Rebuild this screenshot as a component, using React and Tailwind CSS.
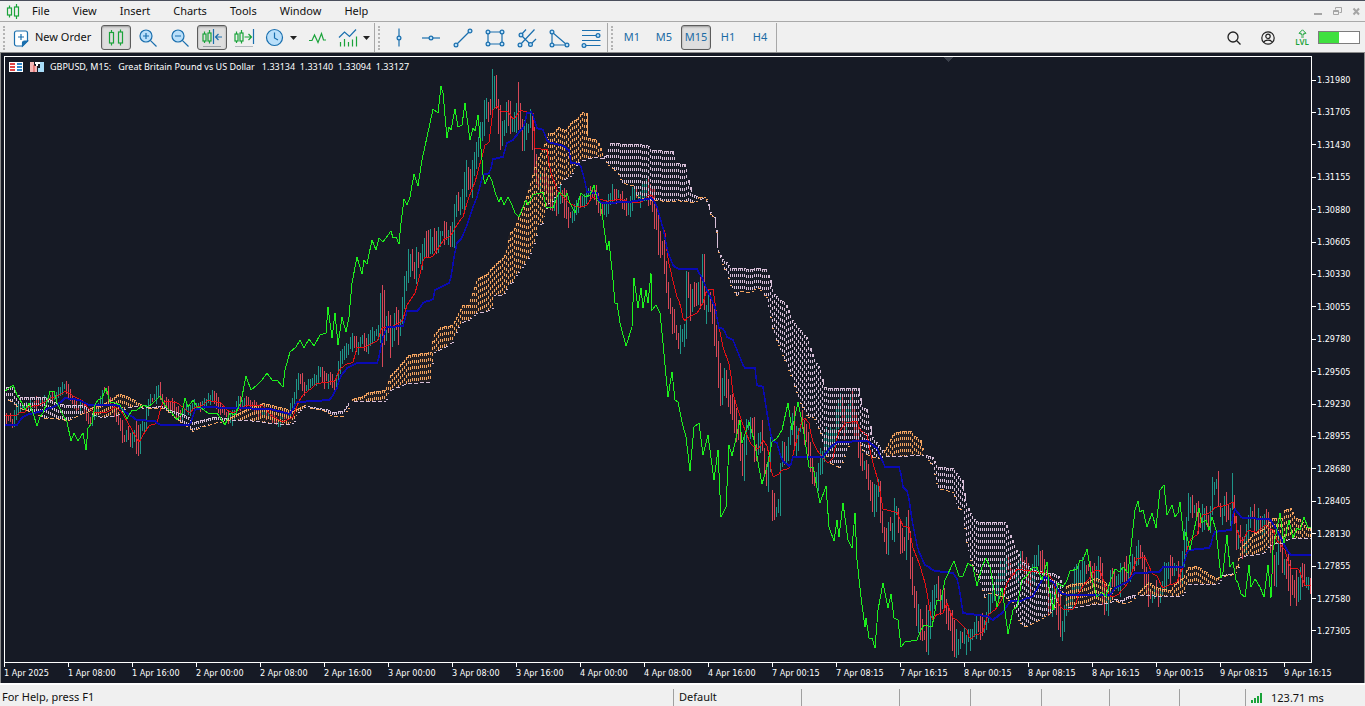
import React from 'react';

const LEFT = 5;
const TOP = 57;
const WIDTH = 1306;
const HEIGHT = 605;

const CHIKOU = [5,391,8,389,13,385,17,395,22,403,25,410,29,403,33,413,37,426,40,417,43,413,47,402,50,391,54,391,57,403,62,413,67,422,71,441,74,433,78,441,83,433,86,450,88,428,92,423,95,405,98,400,102,398,106,388,110,402,115,403,120,405,127,419,132,410,137,410,143,405,148,407,153,403,160,396,163,402,167,408,172,413,177,420,182,413,185,398,188,407,193,400,197,407,200,407,208,413,217,413,225,425,230,413,235,415,241,402,246,376,251,390,257,385,262,380,267,373,272,380,277,380,283,387,285,370,290,352,296,347,300,340,304,348,309,339,314,346,320,335,326,333,328,307,332,338,335,313,338,345,342,317,346,332,349,317,352,283,357,257,362,274,364,260,367,264,372,240,376,250,379,238,383,242,391,231,393,238,396,237,399,244,401,223,404,199,407,205,410,197,414,174,418,186,422,160,427,137,433,109,438,113,441,86,443,93,447,138,449,127,451,130,455,109,458,127,462,125,465,103,470,140,473,128,475,131,478,115,482,160,483,175,485,184,489,175,492,181,496,195,499,202,501,197,504,205,508,197,512,205,515,213,519,217,523,207,526,200,528,205,533,195,543,192,546,207,553,208,557,197,560,192,565,197,567,193,570,203,575,213,578,203,581,193,585,197,590,195,594,185,597,200,600,203,603,220,607,250,609,241,613,280,615,303,617,303,620,323,626,346,632,327,634,278,638,308,641,288,643,308,646,290,648,303,651,273,652,310,656,305,660,313,663,343,668,397,672,372,675,400,678,402,682,422,686,437,690,471,694,427,699,423,703,455,708,435,714,480,718,450,721,517,726,507,729,445,732,456,735,443,740,420,742,443,749,422,754,440,762,484,767,467,772,442,777,438,782,430,788,403,792,430,798,402,803,427,809,467,813,467,820,503,826,486,829,527,834,541,837,520,839,537,843,503,848,540,852,548,855,513,857,560,861,597,865,627,866,618,869,638,872,638,875,648,878,610,883,583,888,608,891,594,894,618,898,620,901,647,905,642,917,640,920,632,924,625,932,627,937,600,941,600,945,580,954,561,959,576,963,576,968,563,973,567,977,586,982,567,986,558,990,567,997,607,1002,588,1008,634,1013,610,1017,607,1022,580,1026,577,1032,568,1037,567,1042,580,1047,562,1049,587,1053,610,1058,583,1063,587,1067,580,1070,571,1077,569,1080,560,1083,560,1087,549,1090,567,1093,583,1097,597,1102,592,1106,597,1110,582,1115,569,1120,572,1123,567,1128,573,1131,547,1135,510,1138,501,1140,512,1143,510,1147,527,1152,513,1156,528,1160,490,1164,485,1167,515,1172,505,1175,517,1178,513,1180,502,1184,540,1186,532,1190,550,1194,530,1199,508,1202,523,1206,520,1209,530,1212,517,1216,530,1221,578,1223,572,1227,535,1230,567,1233,562,1236,580,1238,583,1241,594,1245,597,1249,565,1251,587,1255,579,1260,587,1264,597,1268,565,1271,598,1273,550,1280,513,1284,543,1289,520,1293,538,1297,528,1300,530,1304,517,1308,528,1311,527];

const TENKAN = [5,415,17,415,20,412,25,412,28,406,40,405,50,398,60,395,65,391,72,395,77,398,82,400,87,407,93,412,107,412,115,407,122,412,128,423,139,442,145,432,150,425,157,423,162,403,168,401,175,402,180,405,190,413,195,407,203,405,208,400,220,402,227,410,233,413,247,405,262,405,273,417,283,422,293,417,298,403,303,395,312,388,317,383,335,381,340,369,347,364,353,362,357,347,365,347,372,343,378,340,382,327,390,327,402,322,407,305,410,300,415,293,419,278,424,257,432,257,437,250,445,238,450,237,455,228,460,220,463,217,468,200,475,182,481,160,485,145,489,142,493,110,497,106,500,111,508,111,514,120,520,110,533,113,534,148,547,149,550,170,557,190,563,197,570,204,580,207,587,205,592,197,597,198,607,201,620,199,633,202,642,202,650,194,653,197,657,209,665,233,668,260,677,297,680,303,684,323,687,318,697,313,703,303,707,289,713,289,717,317,723,347,730,367,733,393,738,410,743,425,750,443,758,450,763,440,768,448,772,476,778,475,782,470,790,468,794,450,800,427,804,417,809,423,812,440,818,452,828,463,833,458,838,433,847,422,857,421,860,430,867,435,872,460,878,480,883,509,897,512,903,526,909,527,913,548,920,565,926,587,932,622,937,614,943,613,947,603,953,618,957,620,967,630,970,640,975,635,983,632,988,615,995,610,1002,600,1007,583,1017,569,1027,570,1047,573,1053,580,1058,603,1063,609,1074,609,1080,590,1088,580,1095,570,1100,570,1107,590,1111,597,1118,595,1128,583,1137,558,1145,557,1152,573,1158,577,1162,588,1177,582,1183,567,1187,550,1190,540,1197,535,1202,515,1212,512,1215,507,1227,505,1233,502,1237,530,1242,543,1248,530,1257,532,1265,525,1273,530,1277,540,1285,550,1290,568,1298,568,1305,585,1311,585];

const KIJUN = [5,425,17,425,22,417,30,414,45,410,57,405,65,398,80,400,88,405,118,405,125,412,137,420,155,421,160,425,190,425,195,410,203,407,235,408,270,409,290,414,297,402,330,400,337,388,340,377,347,368,357,363,378,363,382,340,387,327,403,326,407,311,418,311,423,303,433,299,435,290,450,283,454,257,457,243,462,238,467,225,472,210,477,197,483,175,490,173,493,159,503,157,507,143,513,140,520,131,524,127,527,113,532,112,537,128,543,130,548,142,563,146,569,150,571,163,580,164,584,177,587,192,597,193,600,203,630,202,652,198,657,207,663,228,668,253,673,265,678,269,697,269,703,280,708,292,715,307,719,328,724,329,727,337,733,340,737,350,744,368,755,368,756,385,763,387,767,413,772,440,777,443,782,460,790,467,793,457,823,457,830,448,837,442,867,441,877,448,885,467,900,467,903,487,908,492,912,520,918,550,925,565,935,571,953,573,958,580,963,613,987,616,993,620,1002,613,1010,601,1020,601,1033,596,1040,583,1045,577,1053,582,1060,593,1067,595,1110,595,1115,588,1127,582,1135,573,1160,572,1163,567,1183,567,1188,550,1210,548,1214,532,1231,530,1234,508,1242,518,1270,519,1277,530,1287,550,1291,555,1311,555];

// Each entry: trend direction, then x / upper / lower triples
const CLOUD = [
  ['down', [5,387,397,12,387,403,20,397,408,35,397,413,45,397,418,55,403,418,67,405,420,82,405,413,88,408,411]],
  ['up', [89,408,413,100,405,417,110,400,416,117,394,415,125,395,408,135,401,406,143,406,408]],
  ['down', [145,407,408,163,406,408,173,411,416,187,416,427,192,422,431,200,420,427,213,417,423,228,418,420]],
  ['up', [229,418,420,247,408,420,263,403,422,283,408,424,293,411,423,298,408,412,305,405,406]],
  ['down', [307,406,407,325,409,411,332,412,416,343,411,416,348,403,408]],
  ['up', [351,399,401,360,397,401,368,392,401,385,390,401,390,375,390,397,368,387,408,355,383,430,352,382,433,335,353,440,327,349,452,325,342,458,313,327,462,305,322,468,305,320,477,278,312,487,273,311,492,267,308,494,265,295,503,257,295,507,247,287,509,233,283,513,230,282,517,220,273,522,207,267,527,193,260,530,183,253,535,163,240,538,157,225,543,147,222,547,133,203,553,133,200,558,127,187,565,130,178,571,122,175,577,118,163,582,112,160,586,113,159,588,138,158,597,140,157,602,153,158]],
  ['down', [604,156,160,607,155,163,609,143,166,617,143,172,622,144,183,632,144,185,637,144,197,647,145,199,651,150,200,673,151,201,675,163,200,685,164,201,688,180,201,692,194,202,697,197,201]],
  ['up', [698,197,199,705,197,198,707,200,204]],
  ['down', [708,204,206,710,212,214,714,217,218,716,230,232,718,250,252,721,258,262,727,263,275,730,268,285,737,268,297,740,268,291,750,269,292,757,268,287,766,269,297,770,280,317,773,293,333,780,300,350,785,303,363,792,320,380,800,330,403,807,338,417,813,357,417,820,370,433,824,387,453,830,388,463,840,388,468,845,388,453,850,388,442,858,388,440,862,407,450,867,410,455,872,437,457,882,450,458]],
  ['up', [883,452,455,888,443,456,893,433,456,902,431,456,911,431,455,913,435,455,920,440,455,923,452,455]],
  ['down', [925,455,457,932,457,465,937,467,488,953,468,492,957,475,508,962,480,510,965,500,537,970,513,560,975,521,572,980,522,583,984,522,597,988,522,593,1005,522,597,1007,527,599,1013,543,603,1017,552,618,1022,562,627,1033,570,623,1043,572,617,1053,573,610,1058,576,597,1063,587,591]],
  ['up', [1065,587,605,1067,585,607,1077,583,607,1087,582,605,1095,577,604,1107,583,603,1113,593,600]],
  ['down', [1114,599,600,1122,600,603,1127,596,603,1135,595,597]],
  ['up', [1137,593,595,1148,582,595,1157,588,596,1170,590,596,1175,583,596,1183,577,595,1187,567,584,1197,566,584,1207,573,584,1217,578,584,1220,575,580]],
  ['down', [1221,575,576,1233,573,574]],
  ['up', [1235,568,573,1237,563,572,1240,547,557,1247,540,555,1253,533,555,1263,528,553,1272,518,543,1282,518,543,1284,510,541,1290,508,538,1295,518,538,1300,519,538,1305,527,538,1311,528,538]],
];

const pairs = (flat, size) => {
  const rows = [];
  for (let i = 0; i < flat.length; i += size) rows.push(flat.slice(i, i + size));
  return rows;
};

const sample = (rows, x, column = 1) => {
  if (x <= rows[0][0]) return rows[0][column];
  for (let i = 1; i < rows.length; i++) {
    if (x <= rows[i][0]) {
      const a = rows[i - 1];
      const b = rows[i];
      return a[column] + ((b[column] - a[column]) * (x - a[0])) / (b[0] - a[0]);
    }
  }
  return rows[rows.length - 1][column];
};

const noise = (n) => {
  const v = Math.sin(n * 12.9898) * 43758.5453;
  return v - Math.floor(v);
};

const line = (flat) => pairs(flat, 2).map(([x, y], i) => `${i ? 'L' : 'M'}${x} ${y}`).join('');

const box = (x, y, w, h) => `M${x} ${y}h${w}v${h}h${-w}z`;

// Indicator lines move once per bar
const stepped = (flat) => {
  const rows = pairs(flat, 2);
  let d = '';
  for (let x = LEFT; x <= LEFT + WIDTH; x += 2) d += `${d ? 'L' : 'M'}${x} ${Math.round(sample(rows, x))}`;
  return d;
};

// Bars with unusually long wicks: x -> [high, low]
const SPIKES = { 382: [285, 367], 384: [290, 345], 398: [310, 345], 492: [69, 112], 494: [76, 108], 518: [82, 130], 500: [105, 150], 702: [254, 305], 704: [254, 310], 772: [490, 521], 1232: [473, 510], 1290: [560, 606], 1296: [570, 606], 138: [425, 456], 136: [420, 454], 954: [620, 657], 928: [610, 655], 926: [605, 652], 1060: [590, 637] };

const buildBars = () => {
  const opening = [[5, 418], [12, 422], [16, 410], [30, 405], [45, 400], [57, 395]];
  const closes = pairs(CHIKOU, 2);
  const close = (x) => (x < 57 ? sample(opening, x) : sample(closes, x - 52));
  const up = [];
  const down = [];
  for (let x = LEFT + 1; x < LEFT + WIDTH; x += 2) {
    const c = close(x);
    const o = close(x - 2);
    const reach = x < 300 ? 6 : x < 380 ? 8 : x > 570 && x < 640 ? 8 : 14;
    let high = Math.min(c, o) - 1 - noise(x) * reach;
    let low = Math.max(c, o) + 1 + noise(x + 0.7) * reach;
    if (SPIKES[x]) [high, low] = SPIKES[x];
    const y = Math.round(high);
    const rising = c - o + (noise(x + 3) - 0.5) * 3 < 0;
    (rising ? up : down).push(box(x, y, 1, Math.round(low) - y));
  }
  return { up: up.join(''), down: down.join('') };
};

const bars = buildBars();

// The cloud is hatched with one dotted column per bar: 3px on, 3px off
const cloudShapes = CLOUD.map(([trend, flat]) => {
  const rows = pairs(flat, 3);
  const end = rows[rows.length - 1][0];
  const outline = [...rows.map((r) => `${r[0]} ${r[1]}`), ...rows.map((r) => `${r[0]} ${r[2]}`).reverse()];
  let columns = '';
  let caps = '';
  let lower = '';
  for (let x = rows[0][0] + (rows[0][0] % 2), n = 0; x <= end; x += 2, n++) {
    const a = Math.round(sample(rows, x, 1));
    const b = Math.round(sample(rows, x, 2));
    const next = Math.round(sample(rows, x + 2, 1));
    for (let y = a; y < b; y += 6) columns += box(x, y, 1, Math.min(3, b - y));
    if (n % 3 !== 2) caps += box(x, a, 2, 1) + (next - a > 3 ? box(x + 1, a, 1, next - a - 2) : '');
    if (n % 3 !== 0) lower += box(x, b, 2, 1);
  }
  return { trend, columns, caps, lower, area: `M${outline.join('L')}z` };
});

const ORANGE = '#f4a460';
const THISTLE = '#d8bfd8';

function PriceChart() {
  return (
    <svg
      className="block h-full w-full"
      viewBox={`${LEFT} ${TOP} ${WIDTH} ${HEIGHT}`}
      preserveAspectRatio="none"
      fill="none"
      shapeRendering="crispEdges"
      role="img"
      aria-label="GBPUSD M15 with Ichimoku Kinko Hyo"
    >
      <path d={bars.up} fill="#1f9688" />
      <path d={bars.down} fill="#d64857" />
      {cloudShapes.map((s, i) => (
        <g key={i}>
          {s.trend === 'up' && <path d={s.area} fill="#c06010" fillOpacity="0.08" />}
          <path d={s.columns} fill={s.trend === 'up' ? ORANGE : THISTLE} />
          <path d={s.caps} fill={s.trend === 'up' ? ORANGE : THISTLE} />
          <path d={s.lower} fill={s.trend === 'up' ? THISTLE : ORANGE} />
        </g>
      ))}
      <path d={stepped(TENKAN)} stroke="#e60f14" />
      <path d={stepped(KIJUN)} stroke="#0a0ab4" strokeWidth="1.5" />
      <path d={line(CHIKOU)} stroke="#1df01d" />
      <path d="M943 57h11l-5.500 5z" fill="#3a3f4a" />
    </svg>
  );
}

const BLUE = '#1a6fae';
const GREEN = '#1aa33a';
const SKY = '#b9dffa';

function Icon({ children, size = 24 }) {
  return (
    <svg width={size} height={size} viewBox={`0 0 ${size} ${size}`} fill="none" stroke={BLUE} strokeWidth="1.2" className="shrink-0" aria-hidden="true">
      {children}
    </svg>
  );
}

const Node = ({ x, y }) => <circle cx={x} cy={y} r="1.9" fill={SKY} />;

const icons = {
  candles: (
    <Icon>
      <g stroke={GREEN}>
        <path d="M7.500 4v2.500M7.500 17v2.500M16.500 3.500V6M16.500 17v2.500" />
        <rect x="5.500" y="6.500" width="4" height="10.500" />
        <rect x="14.500" y="6" width="4" height="11" />
      </g>
    </Icon>
  ),
  zoomIn: (
    <Icon>
      <circle cx="10" cy="10" r="6" fill={SKY} />
      <path d="M14.300 14.300l6.200 6.200M7 10h6M10 7v6" />
    </Icon>
  ),
  zoomOut: (
    <Icon>
      <circle cx="10" cy="10" r="6" fill={SKY} />
      <path d="M14.300 14.300l6.200 6.200M7 10h6" />
    </Icon>
  ),
  scroll: (
    <Icon>
      <g stroke={GREEN}>
        <path d="M4.500 5.500V8M4.500 15v2M9.500 4v3M9.500 15v2.500" />
        <rect x="3" y="8" width="3" height="7" />
        <rect x="8" y="7" width="3" height="8" />
      </g>
      <path d="M13.500 3v15M22 11h-6.500M18.500 8l-3 3 3 3" />
      <path d="M3 20.500h18" stroke="#9aa0a6" strokeWidth="1" />
    </Icon>
  ),
  shift: (
    <Icon>
      <g stroke={GREEN}>
        <path d="M4.500 5.500V8M4.500 15v2M9.500 4v3M9.500 15v2.500M12.500 11h7M16.500 8l3 3-3 3" />
        <rect x="3" y="8" width="3" height="7" />
        <rect x="8" y="7" width="3" height="8" />
      </g>
      <path d="M21.500 3v15" />
      <path d="M3 20.500h18" stroke="#b5babf" strokeWidth="1" />
    </Icon>
  ),
  clock: (
    <Icon>
      <circle cx="10.500" cy="11.500" r="8" fill={SKY} />
      <path d="M10.500 6.500V12l3.500 2" />
    </Icon>
  ),
  wave: (
    <Icon>
      <path d="M4 14.500h3L9.500 9l3.500 7.500 3.500-9 2 6.500h2.500" stroke={GREEN} />
    </Icon>
  ),
  indicators: (
    <Icon>
      <path d="M2 11.500l5.500-5.500 5 4.500 6.500-7" />
      <path d="M3.500 16v4.500M7.500 13v7.500M11.500 16v4.500M15.500 13.500v7M19.500 10.500v10" stroke={GREEN} />
    </Icon>
  ),
  vertical: (
    <Icon>
      <path d="M12 2.500v18" />
      <Node x="12" y="12" />
    </Icon>
  ),
  horizontal: (
    <Icon>
      <path d="M3 12h18" />
      <Node x="12" y="12" />
    </Icon>
  ),
  trend: (
    <Icon>
      <path d="M5 19L19 5" />
      <Node x="5" y="19" />
      <Node x="19" y="5" />
    </Icon>
  ),
  rectangle: (
    <Icon>
      <path d="M5 6h14v12H5z" />
      <Node x="5" y="6" />
      <Node x="19" y="6" />
      <Node x="5" y="18" />
      <Node x="19" y="18" />
    </Icon>
  ),
  pitchfork: (
    <Icon>
      <path d="M5 19L19.500 3.500M6 9l5-5.500M6 9l9.500 9.500M15.500 18.500l5.500-5.500" />
      <Node x="6" y="9" />
      <Node x="5" y="19" />
      <Node x="15.500" y="18.500" />
    </Icon>
  ),
  triangle: (
    <Icon>
      <path d="M5 6v13h15z" />
      <Node x="5" y="6" />
      <Node x="5" y="19" />
      <Node x="20" y="19" />
    </Icon>
  ),
  fibo: (
    <Icon>
      <path d="M3 4.500h18.500M3 9.500h16M3 14.500h18.500M6 19.500h15.500" />
      <Node x="19" y="9.500" />
      <Node x="5" y="19.500" />
    </Icon>
  ),
};

function ToolButton({ icon, label, pressed, menu }) {
  return (
    <button
      type="button"
      aria-label={label}
      aria-pressed={pressed}
      className={
        menu
          ? 'flex h-6 w-[41px] shrink-0 items-center pl-1'
          : pressed
            ? 'mx-px flex h-[25px] w-[30px] shrink-0 items-center justify-center rounded-[3px] border border-[#5c5c5c] bg-[#dedede] shadow-[inset_0_1px_2px_#9a9a9a]'
            : 'flex h-6 w-8 shrink-0 items-center justify-center'
      }
    >
      {icon}
      {menu && (
        <svg width="7" height="4" viewBox="0 0 7 4" className="ml-0.5 shrink-0" aria-hidden="true">
          <path d="M0 0h7L3.500 4z" fill="#222" />
        </svg>
      )}
    </button>
  );
}

const Grip = () => <div className="mx-[3px] h-6 w-0 shrink-0 border-l-2 border-dotted border-[#b4b4b4]" />;
const Divider = () => <div className="h-full w-px shrink-0 bg-[#a8a8a8]" />;

function MenuBar() {
  return (
    <header className="flex h-[21px] items-center border-t border-[#4a4f5c] pr-1">
      <svg width="16" height="16" viewBox="0 0 16 16" fill="none" stroke={GREEN} strokeWidth="1.2" className="ml-[5px] shrink-0" aria-hidden="true">
        <path d="M4.500 2.500V5M4.500 12v2.500M11.500 1v3M11.500 13v3" />
        <rect x="2.500" y="5" width="4" height="7" />
        <rect x="9.500" y="4" width="4" height="9" />
      </svg>
      <nav className="ml-[11px] flex gap-[23px] text-[11px]">
        {['File', 'View', 'Insert', 'Charts', 'Tools', 'Window', 'Help'].map((m) => (
          <button key={m} type="button" className="leading-4">{m}</button>
        ))}
      </nav>
      <div className="ml-auto flex items-center gap-2.5 text-[#a5a5a5]">
        <button type="button" aria-label="Minimize">
          <svg width="9" height="9" viewBox="0 0 9 9"><path d="M0 6h8v2H0z" fill="currentColor" /></svg>
        </button>
        <button type="button" aria-label="Restore">
          <svg width="9" height="9" viewBox="0 0 9 9" fill="none" stroke="currentColor"><path d="M.5 3.500h5v4h-5zM.5 4.500h5M2.500 2.500v-2h6v5h-2" /></svg>
        </button>
        <button type="button" aria-label="Close">
          <svg width="9" height="9" viewBox="0 0 9 9" fill="none" stroke="currentColor" strokeWidth="2"><path d="M1.500 1.500l5.500 6M7 1.500l-5.500 6" /></svg>
        </button>
      </div>
    </header>
  );
}

function Toolbar() {
  return (
    <div className="flex h-8 items-center border-y border-[#a9a9a9] border-b-[#8c8c8c] pt-px">
      <Grip />
      <button type="button" className="ml-0.5 flex h-6 w-[90px] shrink-0 items-center gap-[3px] text-[11px] whitespace-nowrap">
        <Icon size={22}>
          <path d="M6.500 4h9a2 2 0 0 1 2 2v8l-5 5h-6a2 2 0 0 1-2-2V6a2 2 0 0 1 2-2z" fill="#fff" />
          <path d="M17.500 14h-3a2 2 0 0 0-2 2v3z" fill={BLUE} />
          <path d="M8 10h6M11 7v6" />
        </Icon>
        New Order
      </button>
      <ToolButton icon={icons.candles} label="Candlesticks" pressed />
      <ToolButton icon={icons.zoomIn} label="Zoom in" />
      <ToolButton icon={icons.zoomOut} label="Zoom out" />
      <ToolButton icon={icons.scroll} label="Auto scroll" pressed />
      <ToolButton icon={icons.shift} label="Chart shift" />
      <ToolButton icon={icons.clock} label="Timeframes" menu />
      <ToolButton icon={icons.wave} label="Tick chart" />
      <ToolButton icon={icons.indicators} label="Indicators" menu />
      <Divider />
      <Grip />
      <ToolButton icon={icons.vertical} label="Vertical line" />
      <ToolButton icon={icons.horizontal} label="Horizontal line" />
      <ToolButton icon={icons.trend} label="Trendline" />
      <ToolButton icon={icons.rectangle} label="Rectangle" />
      <ToolButton icon={icons.pitchfork} label="Pitchfork" />
      <ToolButton icon={icons.triangle} label="Triangle" />
      <ToolButton icon={icons.fibo} label="Fibonacci retracement" />
      <Divider />
      <Grip />
      {['M1', 'M5', 'M15', 'H1', 'H4'].map((t) => (
        <button
          key={t}
          type="button"
          aria-pressed={t === 'M15'}
          className={
            t === 'M15'
              ? 'mx-px h-[25px] w-[30px] shrink-0 rounded-[3px] border border-[#5c5c5c] bg-[#dedede] text-[11px] text-[#1a6ba5] shadow-[inset_0_1px_2px_#9a9a9a]'
              : 'h-6 w-8 shrink-0 text-[11px] text-[#1a6ba5]'
          }
        >
          {t}
        </button>
      ))}
      <Divider />
      <div className="ml-auto flex items-center gap-[18px] pr-[5px]">
        <button type="button" aria-label="Search">
          <svg width="16" height="16" viewBox="0 0 16 16" fill="none" stroke="#222" strokeWidth="1.300"><circle cx="7" cy="7" r="5" /><path d="M10.800 10.800l3.700 3.700" /></svg>
        </button>
        <button type="button" aria-label="Account">
          <svg width="16" height="16" viewBox="0 0 16 16" fill="none" stroke="#222" strokeWidth="1.200"><circle cx="8" cy="8" r="6.200" /><circle cx="8" cy="6.300" r="2.200" /><path d="M3.800 12.300c1-3 7.400-3 8.400 0" /></svg>
        </button>
        <div className="flex items-center gap-2">
          <button type="button" className="flex w-4 flex-col items-center text-[8px] leading-[8px] font-semibold text-[#1aa33a]">
            <svg width="9" height="9" viewBox="0 0 9 9" fill="none" stroke={GREEN} aria-hidden="true"><path d="M4.500.8L8 4.300H5.800V6H3.200V4.300H1zM3.200 8h2.600" /></svg>
            LVL
          </button>
          <div className="flex h-[13px] w-[42px] border border-[#7d7d7d] bg-white" role="img" aria-label="Battery half full">
            <div className="w-1/2 bg-[#3fe03f]" />
          </div>
        </div>
      </div>
    </div>
  );
}

const prices = Array.from({ length: 18 }, (_, i) => (1.3198 - i * 0.00275).toFixed(5));
const times = ['1 Apr 2025', '1 Apr 08:00', '1 Apr 16:00', '2 Apr 00:00', '2 Apr 08:00', '2 Apr 16:00', '3 Apr 00:00', '3 Apr 08:00', '3 Apr 16:00', '4 Apr 00:00', '4 Apr 08:00', '4 Apr 16:00', '7 Apr 00:15', '7 Apr 08:15', '7 Apr 16:15', '8 Apr 00:15', '8 Apr 08:15', '8 Apr 16:15', '9 Apr 00:15', '9 Apr 08:15', '9 Apr 16:15'];

function ChartWindow() {
  return (
    <main className="flex min-h-0 flex-1 flex-col border-x border-[#8c8c8c] bg-[#161a25] pt-[3px] pl-[3px] font-['DejaVu_Sans_Condensed','Noto_Sans',sans-serif] text-[9px] text-white">
      <div className="flex min-h-0 flex-1">
        <section className="relative min-w-0 flex-1 border border-white">
          <PriceChart />
          <div className="absolute top-1 left-1 flex items-center leading-3 whitespace-pre">
            <svg width="14" height="12" viewBox="0 0 14 12" aria-hidden="true">
              <path d="M0 1h14v10H0z" fill="#fff" />
              <path d="M1 2h5v2H1zM1 5h5v2H1zM1 8h5v2H1z" fill="#e04545" />
              <path d="M8 2h5v2H8zM8 5h5v2H8zM8 8h5v2H8z" fill="#2f86c8" />
            </svg>
            <svg width="14" height="12" viewBox="0 0 14 12" className="mr-1.5 ml-[7px]" aria-hidden="true">
              <path d="M0 1h4v4h3v6H0z" fill="#f4b6b6" />
              <path d="M10 1h4v10H8V7h2z" fill="#a9dcf8" />
              <path d="M5 1h5v2H8v2H6V3H5z" fill="#fff" />
              <path d="M4 4v7" stroke="#d94848" />
            </svg>
            <h1 className="font-['Noto_Sans',sans-serif] text-[9px]">GBPUSD, M15:   Great Britain Pound vs US Dollar   1.33134  1.33140  1.33094  1.33127</h1>
          </div>
        </section>
        <div className="flex w-[52px] shrink-0 flex-col justify-between pt-[18px] pb-[26px]">
          {prices.map((p) => (
            <div key={p} className="flex items-center gap-px leading-3">
              <span className="h-px w-1 bg-white" />
              {p}
            </div>
          ))}
        </div>
      </div>
      <div className="flex h-5 pr-4">
        {times.map((t) => (
          <div key={t} className="min-w-0 flex-1 whitespace-nowrap">
            <div className="h-1 w-px bg-white" />
            <div className="leading-3">{t}</div>
          </div>
        ))}
      </div>
    </main>
  );
}

function StatusBar() {
  const cell = 'mt-1 shrink-0 border-l border-[#a0a0a0] pl-[5px]';
  return (
    <footer className="flex h-[23px] border-t-2 border-white text-[11px] leading-4">
      <div className="mt-1 flex-1 pl-0.5">For Help, press F1</div>
      <div className={`${cell} w-32`}>Default</div>
      <div className={`${cell} w-[98px]`} />
      <div className={`${cell} w-[71px]`} />
      <div className={`${cell} w-[71px]`} />
      <div className={`${cell} w-[68px]`} />
      <div className={`${cell} w-[70px]`} />
      <div className={`${cell} w-[66px]`} />
      <div className={`${cell} flex w-[120px] items-center gap-2`}>
        <svg width="12" height="10" viewBox="0 0 12 10" fill={GREEN} aria-hidden="true">
          <path d="M0 7h2v3H0zM3 5h2v5H3zM6 3h2v7H6zM9 0h2v10H9z" />
        </svg>
        123.71 ms
      </div>
    </footer>
  );
}

export default function App() {
  return (
    <div className="flex h-screen flex-col overflow-hidden bg-[#f0f0f0] font-['Noto_Sans','Open_Sans',sans-serif] text-[#111]">
      <MenuBar />
      <Toolbar />
      <ChartWindow />
      <StatusBar />
    </div>
  );
}
